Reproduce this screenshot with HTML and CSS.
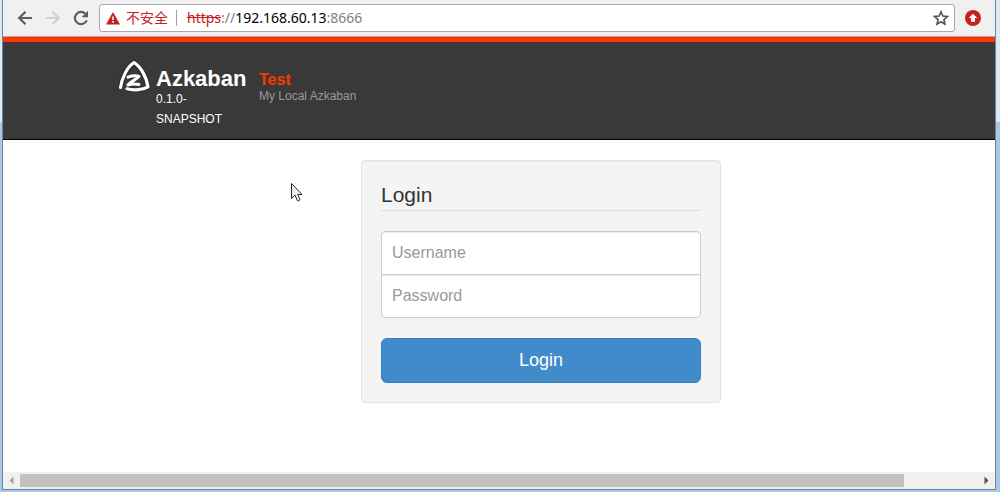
FILE: index.html
```
<!DOCTYPE html>
<html lang="zh-CN">
<head>
    <meta charset="UTF-8">
    <title>Azkaban</title>
    <link rel="stylesheet" href="styles.css">
</head>
<body>
<div class="window">
    <div class="toolbar">
        <button type="button" class="nav" aria-label="Back">
            <svg width="16" height="16" viewBox="0 0 16 16"><path d="M15 8H2.5M8.5 1.7L2.2 8l6.3 6.3" fill="none" stroke="#5a5d61" stroke-width="2.2"/></svg>
        </button>
        <button type="button" class="nav" aria-label="Forward">
            <svg width="16" height="16" viewBox="0 0 16 16"><path d="M1 8h12.5M7.5 1.7L13.8 8l-6.3 6.3" fill="none" stroke="#d0d2d4" stroke-width="2.2"/></svg>
        </button>
        <button type="button" class="nav" aria-label="Reload">
            <svg width="16" height="16" viewBox="0 0 16 16"><path d="M13.7 10.3A6.1 6.1 0 1 1 12.4 3.8" fill="none" stroke="#5a5d61" stroke-width="2.2"/><path d="M15 .8v6.4H8.6z" fill="#5a5d61"/></svg>
        </button>
        <div class="address">
            <svg width="14" height="13" viewBox="0 0 14 13"><path d="M7 0l7 12.5H0z" fill="#c5221f"/><path d="M6.2 4.5h1.6v3.6H6.2zM6.2 9.1h1.6v1.6H6.2z" fill="#fff"/></svg>
            <span class="unsafe">不安全</span>
            <span class="url"><s>https</s>://<b>192.168.60.13</b>:8666</span>
            <button type="button" class="star" aria-label="Bookmark">
                <svg width="16" height="16" viewBox="0 0 16 16"><path d="M8 1.8l1.8 4.3 4.7.4-3.6 3.1 1.1 4.6L8 11.8l-4 2.4 1.1-4.6-3.6-3.1 4.7-.4z" fill="none" stroke="#505356" stroke-width="1.6"/></svg>
            </button>
        </div>
        <button type="button" class="update" aria-label="Update">
            <svg width="16" height="16" viewBox="0 0 16 16"><circle cx="8" cy="8" r="8" fill="#c5221f"/><path d="M8 3.8L12.2 8H10v3.8H6V8H3.8z" fill="#fff"/></svg>
        </button>
    </div>
    <div class="viewport">
        <div class="page">
            <header class="header">
                <svg class="logo" width="34" height="34" viewBox="0 0 34 34">
                    <path d="M3.5 28.5C5 19 9 9.5 17 3.500C24 9.5 29.5 18 31 28C25 31 17 31.5 10 29.5" fill="none" stroke="#222" stroke-width="6" opacity=".4"/>
                    <path d="M3.5 28.5C5 19 10 8 17 3.500C24 8 29.5 18 31 27.800C26 30.8 17 31.8 10 29.8" fill="none" stroke="#fff" stroke-width="3.2" stroke-linecap="round" stroke-linejoin="round"/>
                    <path d="M11 18.2C15 16.8 19 16.5 22 17.5C19 20.5 14 22.500 10.800 26C14 25 18 24.500 22 25.5" fill="none" stroke="#fff" stroke-width="3" stroke-linecap="round" stroke-linejoin="round"/>
                </svg>
                <div class="brand">
                    <h1>Azkaban</h1>
                    <p>0.1.0-SNAPSHOT</p>
                </div>
                <div class="project">
                    <h2>Test</h2>
                    <p>My Local Azkaban</p>
                </div>
            </header>
            <form class="login">
                <h3>Login</h3>
                <input type="text" class="first" placeholder="Username" aria-label="Username">
                <input type="password" class="last" placeholder="Password" aria-label="Password">
                <button type="button" class="submit">Login</button>
            </form>
        </div>
        <svg class="cursor" width="13" height="21" viewBox="0 0 13 21"><path d="M1.5 1.5v15l3.5-3.3 2.3 5.3q1.5 1 2.7-.8L7.7 12.5h4.3z" fill="#f2f2f6" stroke="#23232e" stroke-width="1"/></svg>
    </div>
    <div class="scrollbar">
        <svg width="17" height="17" viewBox="0 0 17 17"><path d="M10.5 4.5v8l-4-4z" fill="#a3a3a3"/></svg>
        <div class="track"><div class="thumb"></div></div>
        <svg width="17" height="17" viewBox="0 0 17 17"><path d="M6.5 4.5v8l4-4z" fill="#505050"/></svg>
    </div>
</div>
</body>
</html>
```
FILE: styles.css
```
*{
    box-sizing: border-box;
}
body,h1,h2,h3,p{
    margin:0;
}
body{
    padding:0 4px 2px 2px;
    background: linear-gradient(#dce8f4 0,#dce8f4 122px,#a9c8e6 122px);
    font-family: "Liberation Sans",Arial,sans-serif;
}
button{
    border:0;
    padding:0;
    background: none;
}
svg{
    display: block;
}
.window{
    display: flex;
    flex-direction: column;
    height: calc(100vh - 2px);
    border:solid #71859d;
    border-width: 0 1px 1px;
    background: #fff;
}

/* browser bar */
.toolbar{
    display: flex;
    align-items: center;
    flex:none;
    height: 37px;
    padding:0 14px;
    background: #f0f0f0;
    border-bottom:1px solid #a6a6a6;
}
.nav{
    margin-right:12px;
}
.nav + .address{
    margin-left:-2px;
}
.address{
    flex:1;
    display: flex;
    align-items: center;
    height: 28px;
    margin-right:10px;
    padding:0 5px 0 6px;
    border:1px solid #a9a9a9;
    border-radius: 3px;
    background: #fff;
    font:14px/20px "Noto Sans","Noto Sans CJK SC",sans-serif;
    color: #808080;
}
.unsafe{
    margin:0 8px 0 6px;
    color: #c5221f;
}
.url{
    flex:1;
    padding-left:10px;
    border-left:1px solid #a0a0a0;
    line-height: 16px;
}
.url s{
    color: #c5221f;
}
.url b{
    font-weight: normal;
    color: #000;
}

/* page, wider than the window */
.viewport{
    position: relative;
    flex:1;
    min-height: 0;
    overflow: hidden;
}
.page{
    min-width: 1076px;
}
.header{
    display: flex;
    align-items: flex-start;
    height: 103px;
    padding:22px 114px 0;
    border-top:5px solid #ff3601;
    border-bottom:1px solid #000;
    background: #393939;
    color: #fff;
}
.logo{
    margin-top:-5px;
}
.brand{
    width: 98px;
    margin:0 5px;
}
.brand h1{
    font-size: 22px;
    line-height: 30px;
}
.brand p{
    width: 70px;
    margin-top:-5px;
    font-size: 12px;
    line-height: 20px;
}
.project h2{
    padding-top:6px;
    font-size: 16px;
    line-height: 20px;
    color: #ff3601;
}
.project p{
    margin-top:-1px;
    font-size: 12px;
    line-height: 14px;
    color: #999;
}
.login{
    width: 360px;
    margin:20px auto;
    padding:19px;
    border:1px solid #e3e3e3;
    border-radius: 4px;
    background: #f4f4f4;
    box-shadow: inset 0 1px 1px rgba(0,0,0,.05);
}
.login h3{
    margin-bottom:20px;
    padding:1px 0;
    border-bottom:1px solid #e0e0e0;
    font-size: 21px;
    line-height: 28px;
    font-weight: normal;
    color: #333;
}
.login input{
    display: block;
    width: 100%;
    height: 44px;
    padding:0 10px;
    border:1px solid #ccc;
    background: #fff;
    box-shadow: inset 0 1px 1px rgba(0,0,0,.075);
    font:16px/22px "Liberation Sans",Arial,sans-serif;
}
.login input::placeholder{
    color: #999;
}
.login .first{
    border-radius: 4px 4px 0 0;
}
.login .last{
    margin-top:-1px;
    border-radius: 0 0 4px 4px;
}
.submit{
    width: 100%;
    height: 45px;
    margin-top:20px;
    padding-bottom:2px;
    border:1px solid #357ebd;
    border-radius: 6px;
    background: #428bca;
    font:18px/24px "Liberation Sans",Arial,sans-serif;
    color: #fff;
}
.cursor{
    position: absolute;
    left:287px;
    top:145px;
}

.scrollbar{
    display: flex;
    flex:none;
    height: 17px;
    background: #f0f0f0;
}
.track{
    flex:1;
    padding:2px 0;
}
.thumb{
    width: 92.3%;
    height: 13px;
    background: #c1c1c1;
}
```
